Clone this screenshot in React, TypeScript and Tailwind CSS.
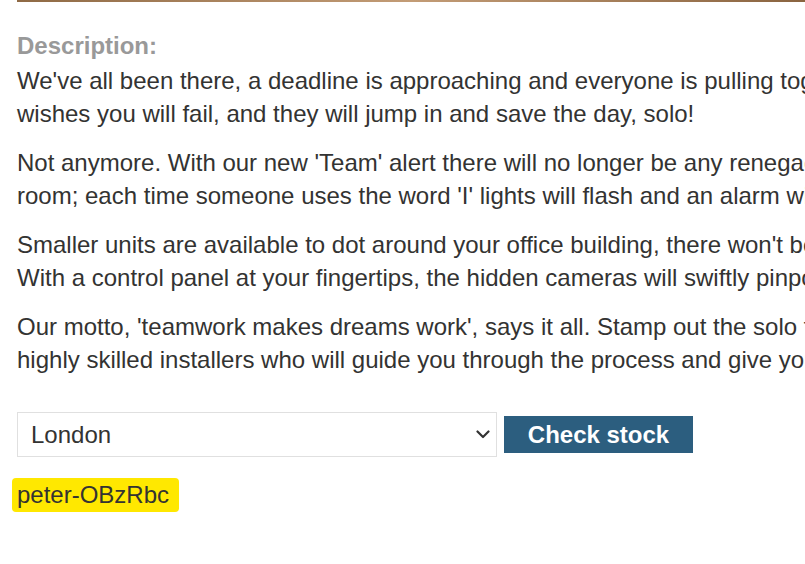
const paragraphs: string[][] = [
  [
    "We've all been there, a deadline is approaching and everyone is pulling together, all except that one person who secretly",
    "wishes you will fail, and they will jump in and save the day, solo!",
  ],
  [
    "Not anymore. With our new 'Team' alert there will no longer be any renegades on your team. Installed discreetly in your office",
    "room; each time someone uses the word 'I' lights will flash and an alarm will sound, alerting the group to the selfish one.",
  ],
  [
    "Smaller units are available to dot around your office building, there won't be anywhere for them to hide.",
    "With a control panel at your fingertips, the hidden cameras will swiftly pinpoint the offender in real time.",
  ],
  [
    "Our motto, 'teamwork makes dreams work', says it all. Stamp out the solo flyers today, and book an appointment with our",
    "highly skilled installers who will guide you through the process and give you full training on the equipment.",
  ],
];

export default function App() {
  return (
    <div className="w-[805px] h-[564px] overflow-hidden bg-white font-['Liberation_Sans',Arial,sans-serif] text-[#333332]">
      <div className="ml-[17px] h-[2px] bg-gradient-to-r from-[#8f6a45] via-[#c39c76] to-[#8a6440]" />

      <div className="pl-[17px] pt-[27px]">
        <h3 className="text-[24px] leading-[33px] font-bold text-[#999999]">
          Description:
        </h3>

        <div className="mt-[2px]">
          {paragraphs.map((lines, i) => (
            <p key={i} className="mb-4 whitespace-nowrap text-[24px] leading-[33px]">
              {lines.map((line, j) => (
                <span key={j} className="block">
                  {line}
                </span>
              ))}
            </p>
          ))}
        </div>

        <form className="mt-[36px] flex items-center gap-[7px]">
          <div className="relative">
            <select
              defaultValue="London"
              className="h-[45px] w-[480px] appearance-none border border-[#e0e0e0] bg-white pl-[13px] text-[24px] text-[#333332] outline-none"
            >
              <option>London</option>
              <option>Paris</option>
              <option>Milan</option>
            </select>
            <svg
              viewBox="0 0 14 9"
              className="pointer-events-none absolute right-[7px] top-[18px] h-[9px] w-[14px]"
              fill="none"
              stroke="#333"
              strokeWidth="2.2"
              strokeLinecap="round"
              strokeLinejoin="round"
            >
              <polyline points="1.5,1.5 7,7 12.5,1.5" />
            </svg>
          </div>
          <button
            type="button"
            className="h-[37px] w-[189px] bg-[#2c5e7f] text-[24px] font-bold text-white"
          >
            Check stock
          </button>
        </form>

        <div className="mt-[21px] -ml-[5px] inline-block rounded-[4px] bg-[#ffe800] pl-[5px] pr-[10px] py-[1px] text-[24px] leading-[32px] text-[#333332]">
          peter-OBzRbc
        </div>
      </div>
    </div>
  );
}
